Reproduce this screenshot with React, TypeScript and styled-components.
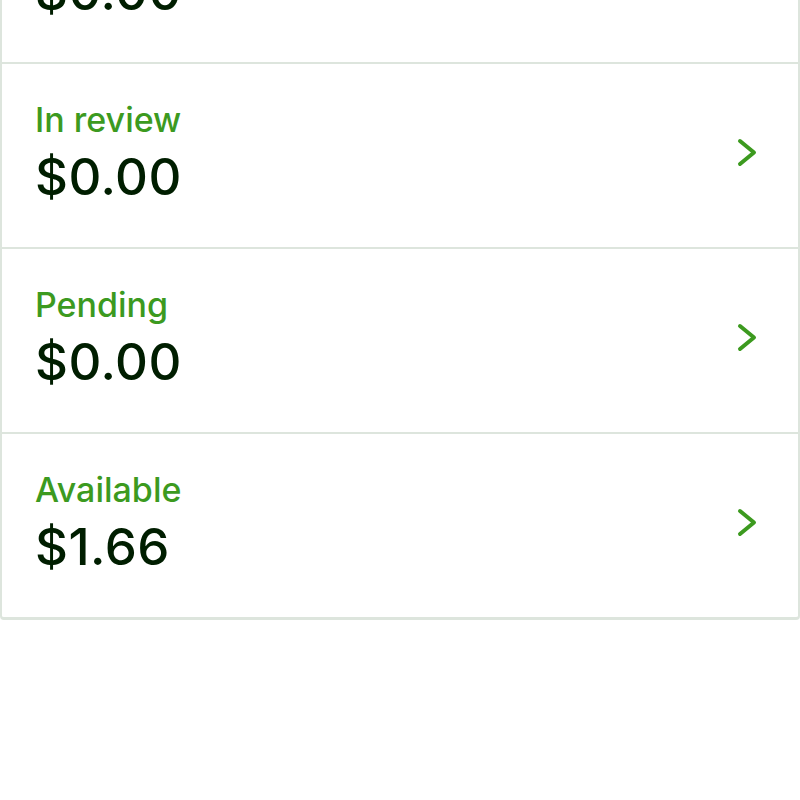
import React from 'react';
import styled, { createGlobalStyle } from 'styled-components';

const GlobalStyle = createGlobalStyle`
  html, body {
    margin: 0;
    padding: 0;
    background: #ffffff;
    font-family: Inter, "Liberation Sans", Arial, sans-serif;
  }
  #root {
    overflow: hidden;
    height: 800px;
  }
`;

const Card = styled.section`
  margin-top: -123px;
  border: 2px solid #dde5dd;
  border-bottom-width: 3px;
  border-radius: 0 0 4px 4px;
  background: #fff;
`;

const Row = styled.div<{ $last?: boolean }>`
  height: 183px;
  display: flex;
  align-items: center;
  justify-content: space-between;
  padding: 0 37px 0 33px;
  border-bottom: ${(p) => (p.$last ? 'none' : '2px solid #dde5dd')};
`;

const Info = styled.div`
  display: flex;
  flex-direction: column;
  margin-top: -4px;
`;

const Label = styled.div`
  color: #3c9a1f;
  font-size: 34px;
  line-height: 40px;
  font-weight: 500;
  margin-bottom: 6px;
`;

const Amount = styled.div`
  color: #001e00;
  font-size: 51px;
  line-height: 62px;
  font-weight: 500;
  letter-spacing: 0.5px;
`;

const ChevronIcon = styled.svg`
  margin-top: -6px;
`;

const Chevron = () => (
  <ChevronIcon width="26" height="30" viewBox="0 0 26 30" fill="none">
    <path d="M5 3 L19 14.5 L5 26" stroke="#3c9a1f" strokeWidth="4" strokeLinecap="round" strokeLinejoin="round" />
  </ChevronIcon>
);

const rows = [
  { label: 'Work in progress', amount: '$0.00' },
  { label: 'In review', amount: '$0.00' },
  { label: 'Pending', amount: '$0.00' },
  { label: 'Available', amount: '$1.66' },
];

export default function App() {
  return (
    <>
      <GlobalStyle />
      <Card>
        {rows.map((r, i) => (
          <Row key={i} $last={i === rows.length - 1}>
            <Info>
              <Label>{r.label}</Label>
              <Amount>{r.amount}</Amount>
            </Info>
            <Chevron />
          </Row>
        ))}
      </Card>
    </>
  );
}
